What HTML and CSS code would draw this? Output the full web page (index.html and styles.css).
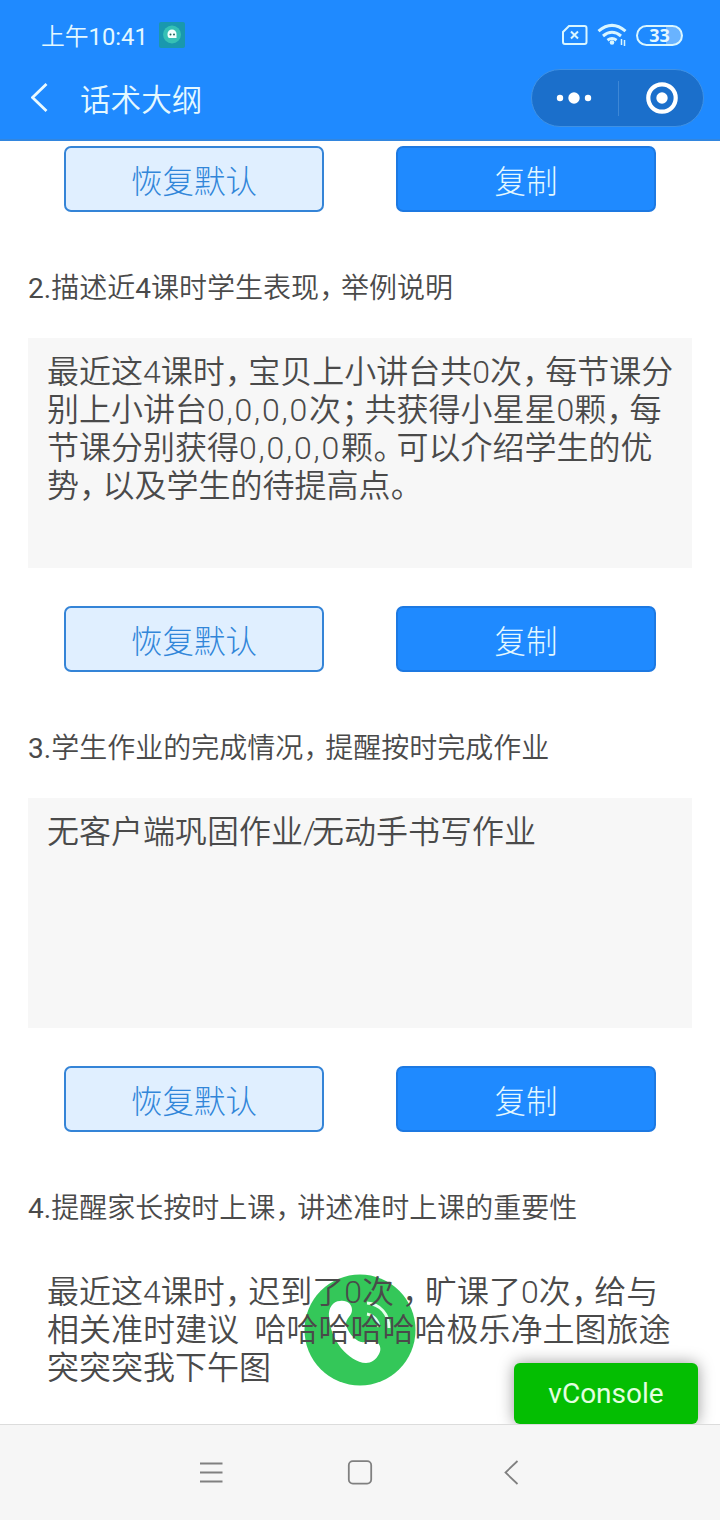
FILE: index.html
```html
<!DOCTYPE html>
<html lang="zh-CN">
<head>
  <meta charset="utf-8">
  <title>话术大纲</title>
  <link rel="stylesheet" href="styles.css">
</head>
<body>
  <header class="header">
    <div class="status-bar">
      <span class="time">上午<span class="num">10:41</span></span>
      <svg class="app-icon" width="26" height="26" viewBox="0 0 26 26">
        <rect width="26" height="26" rx="2" fill="#1998ae"/>
        <circle cx="13" cy="12.500" r="9" fill="#35c0b5"/>
        <path d="M8.500 12a4.500 4.500 0 0 1 9 0v4H10.500q-2 0-2-4z" fill="#f2fffc"/>
        <circle cx="11.500" cy="12.500" r="1" fill="#20645e"/>
        <circle cx="15" cy="12.500" r="1" fill="#20645e"/>
      </svg>
      <div class="status-icons">
        <svg width="26" height="20" viewBox="0 0 26 20" fill="none" stroke="#d9f6ff" stroke-width="2">
          <path d="M7 1H22.500Q24.500 1 24.500 3V17Q24.500 19 22.500 19H3Q1 19 1 17V7Z"/>
          <path d="M9 6.500l7 7M16 6.500l-7 7"/>
        </svg>
        <svg class="wifi" width="30" height="24" viewBox="0 0 30 24" fill="none" stroke="#d9f6ff" stroke-width="3">
          <path d="M1.500 8.200Q15 -3.500 28.500 8.200"/>
          <path d="M6 13Q15 5.500 24 13"/>
          <path d="M10.500 17.200Q15 13.700 19.500 17.200"/>
          <circle cx="15" cy="19.500" r="2.300" fill="#d9f6ff" stroke="none"/>
          <path d="M24.500 16v6M27.500 17v6" stroke-width="1.500"/>
        </svg>
        <span class="battery">33</span>
      </div>
    </div>
    <div class="title-bar">
      <svg class="back" width="18" height="30" viewBox="0 0 18 30" fill="none" stroke="#eafaff" stroke-width="2.800">
        <path d="M15.500 1L1.500 14.500L15.500 28"/>
      </svg>
      <h1 class="title">话术大纲</h1>
      <div class="capsule">
        <svg width="36" height="14" viewBox="0 0 36 14" fill="#fff">
          <circle cx="4" cy="7" r="3.200"/>
          <circle cx="18" cy="7" r="5.700"/>
          <circle cx="32" cy="7" r="3.200"/>
        </svg>
        <span class="divider"></span>
        <svg width="32" height="32" viewBox="0 0 32 32">
          <circle cx="16" cy="16" r="13.700" fill="none" stroke="#fff" stroke-width="4.200"/>
          <circle cx="16" cy="16" r="5.700" fill="#fff"/>
        </svg>
      </div>
    </div>
  </header>

  <main class="content">
    <div class="buttons">
      <button class="btn reset">恢复默认</button>
      <button class="btn copy">复制</button>
    </div>

    <h2 class="question"><span class="num">2.</span>描述近<span class="num">4</span>课时学生表现<i>，</i>举例说明</h2>
    <div class="answer">最近这4课时<i>，</i>宝贝上小讲台共0次<i>，</i>每节课分
别上小讲台<b>0,0,0,0</b>次<i>；</i>共获得小星星0颗<i>，</i>每
节课分别获得<b>0,0,0,0</b>颗<i>。</i>可以介绍学生的优
势<i>，</i>以及学生的待提高点<i>。</i></div>
    <div class="buttons">
      <button class="btn reset">恢复默认</button>
      <button class="btn copy">复制</button>
    </div>

    <h2 class="question"><span class="num">3.</span>学生作业的完成情况<i>，</i>提醒按时完成作业</h2>
    <div class="answer">无客户端巩固作业<span class="slash">/</span>无动手书写作业</div>
    <div class="buttons">
      <button class="btn reset">恢复默认</button>
      <button class="btn copy">复制</button>
    </div>

    <h2 class="question"><span class="num">4.</span>提醒家长按时上课<i>，</i>讲述准时上课的重要性</h2>
    <div class="answer plain">最近这4课时<i>，</i>迟到了0次 <i>，</i>旷课了0次<i>，</i>给与
相关准时建议  哈哈哈哈哈哈极乐净土图旅途
突突突我下午图</div>

    <svg class="call" width="112" height="112" viewBox="0 0 112 112">
      <circle cx="56" cy="56" r="55.500" fill="#34c759"/>
      <path d="M25 43C24 34 29 27 36 27C43 26 48 30 48 36C48 42 42 44 42 50C43 57 50 66 57 68C62 69 66 65 71 67C76 69 78 75 75 80C72 86 67 89 62 89C53 89 44 82 37 74C30 65 26 55 25 43Z" fill="#fff"/>
      <path d="M63 29C76 30 85 40 85 54M63 40C69 41 74 46 75 53" fill="none" stroke="#e4ffeb" stroke-width="3"/>
    </svg>
    <div class="vconsole">vConsole</div>
  </main>

  <nav class="nav-bar">
    <svg width="26" height="26" viewBox="0 0 26 26" fill="none" stroke="#808080" stroke-width="1.800">
      <path d="M3 3.500h22.500M3 12.500h22.500M3 21.500h22.500"/>
    </svg>
    <svg width="26" height="26" viewBox="0 0 26 26" fill="none" stroke="#808080" stroke-width="1.800">
      <rect x="1.800" y="1.200" width="22.400" height="22.400" rx="4"/>
    </svg>
    <svg width="26" height="26" viewBox="0 0 26 26" fill="none" stroke="#808080" stroke-width="1.800">
      <path d="M20.500 1L8.500 12.500L20.500 24"/>
    </svg>
  </nav>
</body>
</html>
```
FILE: styles.css
```css
* {
  box-sizing: border-box;
}

body {
  margin: 0;
  width: 720px;
  height: 1520px;
  overflow: hidden;
  display: flex;
  flex-direction: column;
  background: #fff;
  color: #4a4a4a;
  font-family: Roboto, "Noto Sans CJK SC", sans-serif;
  font-weight: 350;
}

svg {
  display: block;
  flex: none;
}

/* narrow fullwidth punctuation */
i {
  font-style: normal;
  font-feature-settings: "halt";
  padding: 0 0.22em 0 0.01em;
}

b {
  font-weight: inherit;
  letter-spacing: 1.8px;
}

.num {
  font-weight: 400;
}

.slash {
  letter-spacing: -3.8px;
}

.header {
  height: 141px;
  flex: none;
  background: #1f8aff;
  border-bottom: 2px solid #3286df;
  color: #e4f8ff;
}

.status-bar {
  display: flex;
  align-items: center;
  height: 70px;
  padding: 0 37px 0 41px;
}

.time {
  width: 118px;
  padding-bottom: 1px;
  font-size: 23.8px;
}

.status-icons {
  display: flex;
  align-items: center;
  gap: 9px;
  margin-left: auto;
}

.battery {
  width: 47px;
  height: 21px;
  border: 2px solid #d9f6ff;
  border-radius: 11px;
  background: linear-gradient(90deg, #1f8aff 65%, #69b3ff 65%);
  font: bold 18px/17px "Open Sans", sans-serif;
  text-align: center;
}

.title-bar {
  display: flex;
  align-items: center;
  height: 56px;
  padding: 0 16px 0 31px;
}

.title {
  margin: 6px 0 0 31px;
  font-size: 30.6px;
  font-weight: 350;
  line-height: 40px;
}

.capsule {
  display: flex;
  align-items: center;
  justify-content: space-between;
  width: 173px;
  height: 58px;
  margin-left: auto;
  padding: 0 25px 0 24px;
  border: 1px solid #3f91e4;
  border-radius: 29px;
  background: #1b6fcb;
}

.divider {
  width: 1px;
  height: 35px;
  margin-left: -2px;
  background: #3d87d6;
}

.content {
  position: relative;
  height: 1283px;
  flex: none;
  padding: 5px 28px 0;
  overflow: hidden;
}

.buttons {
  display: flex;
  gap: 72px;
  padding: 0 36px;
}

.btn {
  width: 260px;
  height: 66px;
  padding: 7px 0 0;
  border: 2px solid #3484d7;
  border-radius: 7px;
  font-family: inherit;
  font-size: 31.5px;
  font-weight: 300;
  line-height: 38px;
}

.reset {
  background: #e0efff;
  color: #3186d9;
}

.copy {
  background: #1f8aff;
  border-color: #1d79e2;
  color: #e4f8ff;
}

.question {
  margin: 57px 0 29px;
  font-size: 28px;
  font-weight: 350;
  line-height: 40px;
  white-space: pre;
}

.question i {
  padding-right: 0.28em;
}

.answer {
  position: relative;
  z-index: 1;
  height: 230px;
  margin-bottom: 38px;
  padding: 15px 19px;
  background: #f7f7f7;
  font-size: 32px;
  line-height: 38px;
  white-space: pre;
}

.plain {
  background: none;
}

/* call button sits behind the answer text */
.call {
  position: absolute;
  left: 304px;
  top: 1133px;
}

.vconsole {
  position: absolute;
  z-index: 2;
  right: 22px;
  bottom: 0;
  width: 184px;
  height: 61px;
  border-radius: 6px;
  background: #04be02;
  box-shadow: 0 0 16px rgba(0, 0, 0, 0.4);
  color: #e3ffe0;
  font: 28px/61px Roboto, sans-serif;
  text-align: center;
}

.nav-bar {
  display: flex;
  align-items: center;
  justify-content: center;
  gap: 124px;
  height: 96px;
  flex: none;
  border-top: 1px solid #dcdcdc;
  background: #f6f6f6;
}
```
